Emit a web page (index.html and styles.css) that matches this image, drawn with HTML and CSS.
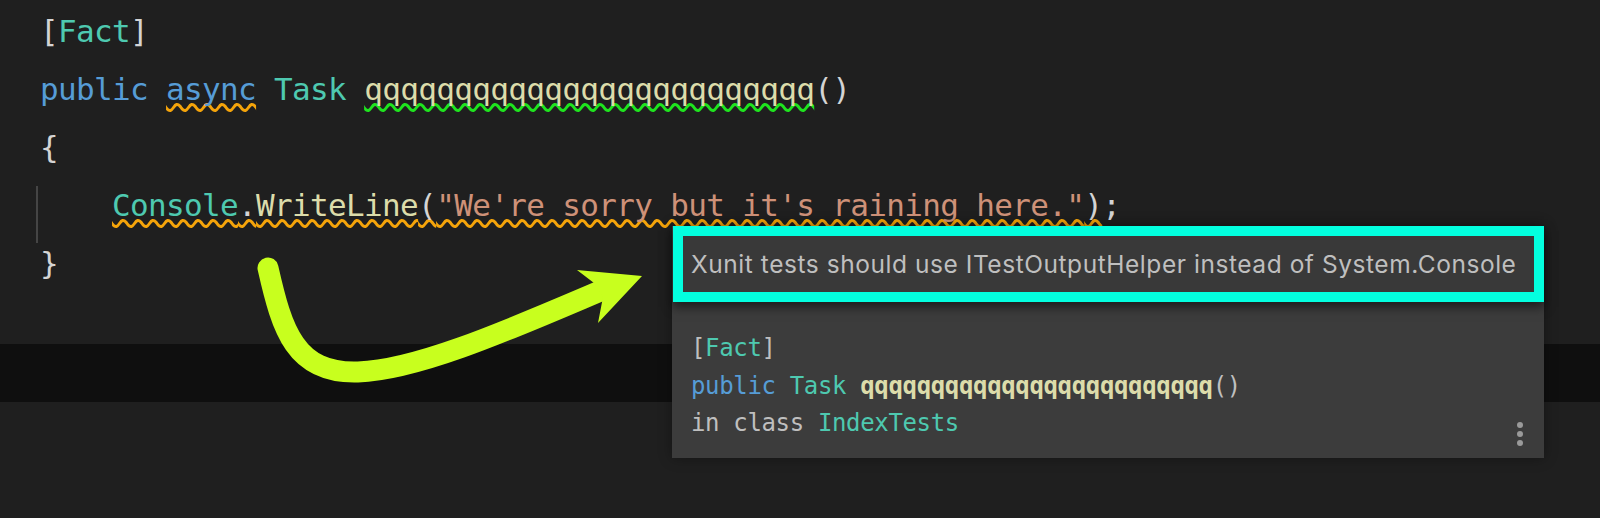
FILE: index.html
```html
<!DOCTYPE html>
<html>
<head>
<meta charset="utf-8">
<link rel="stylesheet" href="styles.css">
</head>
<body>
<div class="page">
  <div class="code">
    <div class="line"><span class="p">[</span><span class="t">Fact</span><span class="p">]</span></div>
    <div class="line"><span class="k">public</span> <span class="k warn">async</span> <span class="t">Task</span> <span class="m info">qqqqqqqqqqqqqqqqqqqqqqqqq</span><span class="p">()</span></div>
    <div class="line"><span class="p">{</span></div>
    <div class="line guide">    <span class="warn"><span class="t">Console</span><span class="p">.</span><span class="m">WriteLine</span><span class="p">(</span><span class="s">"We're sorry but it's raining here."</span><span class="p">)</span></span><span class="p">;</span></div>
    <div class="line"><span class="p">}</span></div>
  </div>
  <div class="band"></div>

  <svg class="arrow" width="1600" height="518" viewBox="0 0 1600 518">
    <path d="M268,268 C282,330 295,374 358,372 C420,370 520,325 605,289" fill="none" stroke="#c8ff1e" stroke-width="21" stroke-linecap="round"/>
    <polygon points="577,270 642,276 598,323 603,297 594,283" fill="#c8ff1e"/>
  </svg>

  <div class="tooltip">
    <div class="tip-head">Xunit tests should use ITestOutputHelper instead of System.Console</div>
    <div class="tip-body">
      <div class="tline"><span class="tp">[</span><span class="t">Fact</span><span class="tp">]</span></div>
      <div class="tline"><span class="k">public</span> <span class="t">Task</span> <span class="m bold">qqqqqqqqqqqqqqqqqqqqqqqqq</span><span class="tp">()</span></div>
      <div class="tline"><span class="tp">in class</span> <span class="t">IndexTests</span></div>
    </div>
    <div class="dots"><span></span><span></span><span></span></div>
  </div>
</div>
</body>
</html>
```
FILE: styles.css
```css
html, body {
  margin: 0;
  padding: 0;
  background: #1f1f1f;
}
.page {
  position: relative;
  width: 1600px;
  height: 518px;
  overflow: hidden;
}
.code {
  padding: 2px 0 0 40px;
  font-family: "DejaVu Sans Mono", monospace;
  font-size: 31px;
  letter-spacing: -0.66px;
  color: #d4d4d4;
}
.line {
  height: 58px;
  line-height: 58px;
  white-space: pre;
}
.guide {
  position: relative;
}
.guide::before {
  content: "";
  position: absolute;
  left: -4px;
  top: 10px;
  width: 2px;
  height: 57px;
  background: #454545;
}
.p { color: #d4d4d4; }
.t { color: #4ec9b0; }
.k { color: #569cd6; }
.m { color: #dcdcaa; }
.s { color: #ce9178; }
.warn, .info {
  text-decoration-line: underline;
  text-decoration-style: wavy;
  text-decoration-thickness: 2.6px;
  text-underline-offset: 3px;
  text-decoration-skip-ink: none;
}
.warn { text-decoration-color: #f5a40a; }
.info { text-decoration-color: #1ee41e; }
.band {
  margin-top: 52px;
  height: 58px;
  background: #0f0f0f;
}
.arrow {
  position: absolute;
  left: 0;
  top: 0;
}
.tooltip {
  position: absolute;
  left: 672px;
  top: 226px;
  width: 872px;
  height: 232px;
  background: #3c3c3c;
  box-shadow: 0 0 12px rgba(0, 0, 0, 0.35);
}
.tip-head {
  margin-left: 1px;
  height: 56px;
  border: 10px solid #03ffdf;
  background: #393939;
  padding-left: 8px;
  font-family: Inter, "Liberation Sans", Arial, sans-serif;
  font-size: 24.5px;
  letter-spacing: 0.55px;
  line-height: 56px;
  color: #bfbfbf;
  white-space: nowrap;
  box-shadow: 0 5px 10px rgba(0, 0, 0, 0.55);
}
.tip-body {
  padding: 28px 0 0 19px;
  font-family: "DejaVu Sans Mono", monospace;
  font-size: 24px;
  letter-spacing: -0.35px;
}
.tline {
  height: 37.5px;
  line-height: 37.5px;
  white-space: pre;
}
.tp { color: #bfbfbf; }
.bold { font-weight: bold; }
.dots {
  position: absolute;
  right: 21px;
  bottom: 12px;
  display: flex;
  flex-direction: column;
  gap: 3px;
}
.dots span {
  width: 6px;
  height: 6px;
  border-radius: 50%;
  background: #9a9a9a;
}
```
